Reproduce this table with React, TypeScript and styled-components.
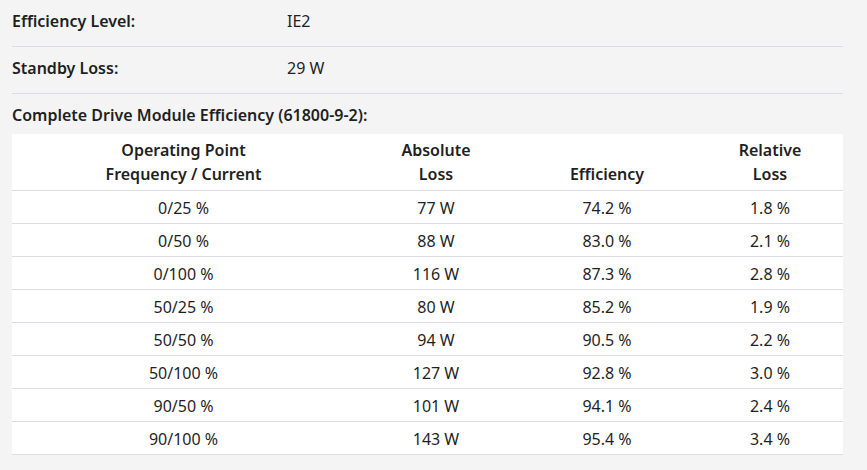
import React from "react";
import styled, { createGlobalStyle } from "styled-components";

const Global = createGlobalStyle`
  html, body { margin: 0; padding: 0; background: #f4f4f4; }
  body { font-family: "Noto Sans", "Open Sans", sans-serif; color: #1f1f1f; font-size: 16px; }
`;

const Page = styled.div`
  width: 831px;
  padding: 0 0 0 12px;
`;

const InfoRow = styled.div`
  display: flex;
  padding: 9px 0 13px;
  line-height: 24px;
  border-bottom: 1px solid #dcdde3;
`;

const Label = styled.div`
  width: 275px;
  font-weight: 600;
`;

const Value = styled.div`
  font-weight: 400;
`;

const Title = styled.div`
  padding: 9px 0 0;
  line-height: 24px;
  font-weight: 600;
  margin-bottom: 7px;
`;

const Table = styled.table`
  width: 831px;
  border-collapse: collapse;
  background: #ffffff;
  table-layout: fixed;
`;

const Th = styled.th<{ $w: number }>`
  width: ${(p) => p.$w}px;
  font-weight: 600;
  text-align: center;
  vertical-align: bottom;
  line-height: 24px;
  padding: 4px 0;
  border-bottom: 1px solid #dcdde3;
`;

const Td = styled.td`
  text-align: center;
  line-height: 24px;
  padding: 5px 0 3px;
  border-bottom: 1px solid #dcdde3;
  font-weight: 400;
`;

const rows = [
  ["0/25 %", "77 W", "74.2 %", "1.8 %"],
  ["0/50 %", "88 W", "83.0 %", "2.1 %"],
  ["0/100 %", "116 W", "87.3 %", "2.8 %"],
  ["50/25 %", "80 W", "85.2 %", "1.9 %"],
  ["50/50 %", "94 W", "90.5 %", "2.2 %"],
  ["50/100 %", "127 W", "92.8 %", "3.0 %"],
  ["90/50 %", "101 W", "94.1 %", "2.4 %"],
  ["90/100 %", "143 W", "95.4 %", "3.4 %"],
];

export default function App() {
  return (
    <Page>
      <Global />
      <InfoRow>
        <Label>Efficiency Level:</Label>
        <Value>IE2</Value>
      </InfoRow>
      <InfoRow>
        <Label>Standby Loss:</Label>
        <Value>29 W</Value>
      </InfoRow>
      <Title>Complete Drive Module Efficiency (61800-9-2):</Title>
      <Table>
        <thead>
          <tr>
            <Th $w={343}>Operating Point<br />Frequency / Current</Th>
            <Th $w={162}>Absolute<br />Loss</Th>
            <Th $w={180}>Efficiency</Th>
            <Th $w={146}>Relative<br />Loss</Th>
          </tr>
        </thead>
        <tbody>
          {rows.map((r) => (
            <tr key={r[0]}>
              {r.map((c, i) => (
                <Td key={i}>{c}</Td>
              ))}
            </tr>
          ))}
        </tbody>
      </Table>
    </Page>
  );
}
